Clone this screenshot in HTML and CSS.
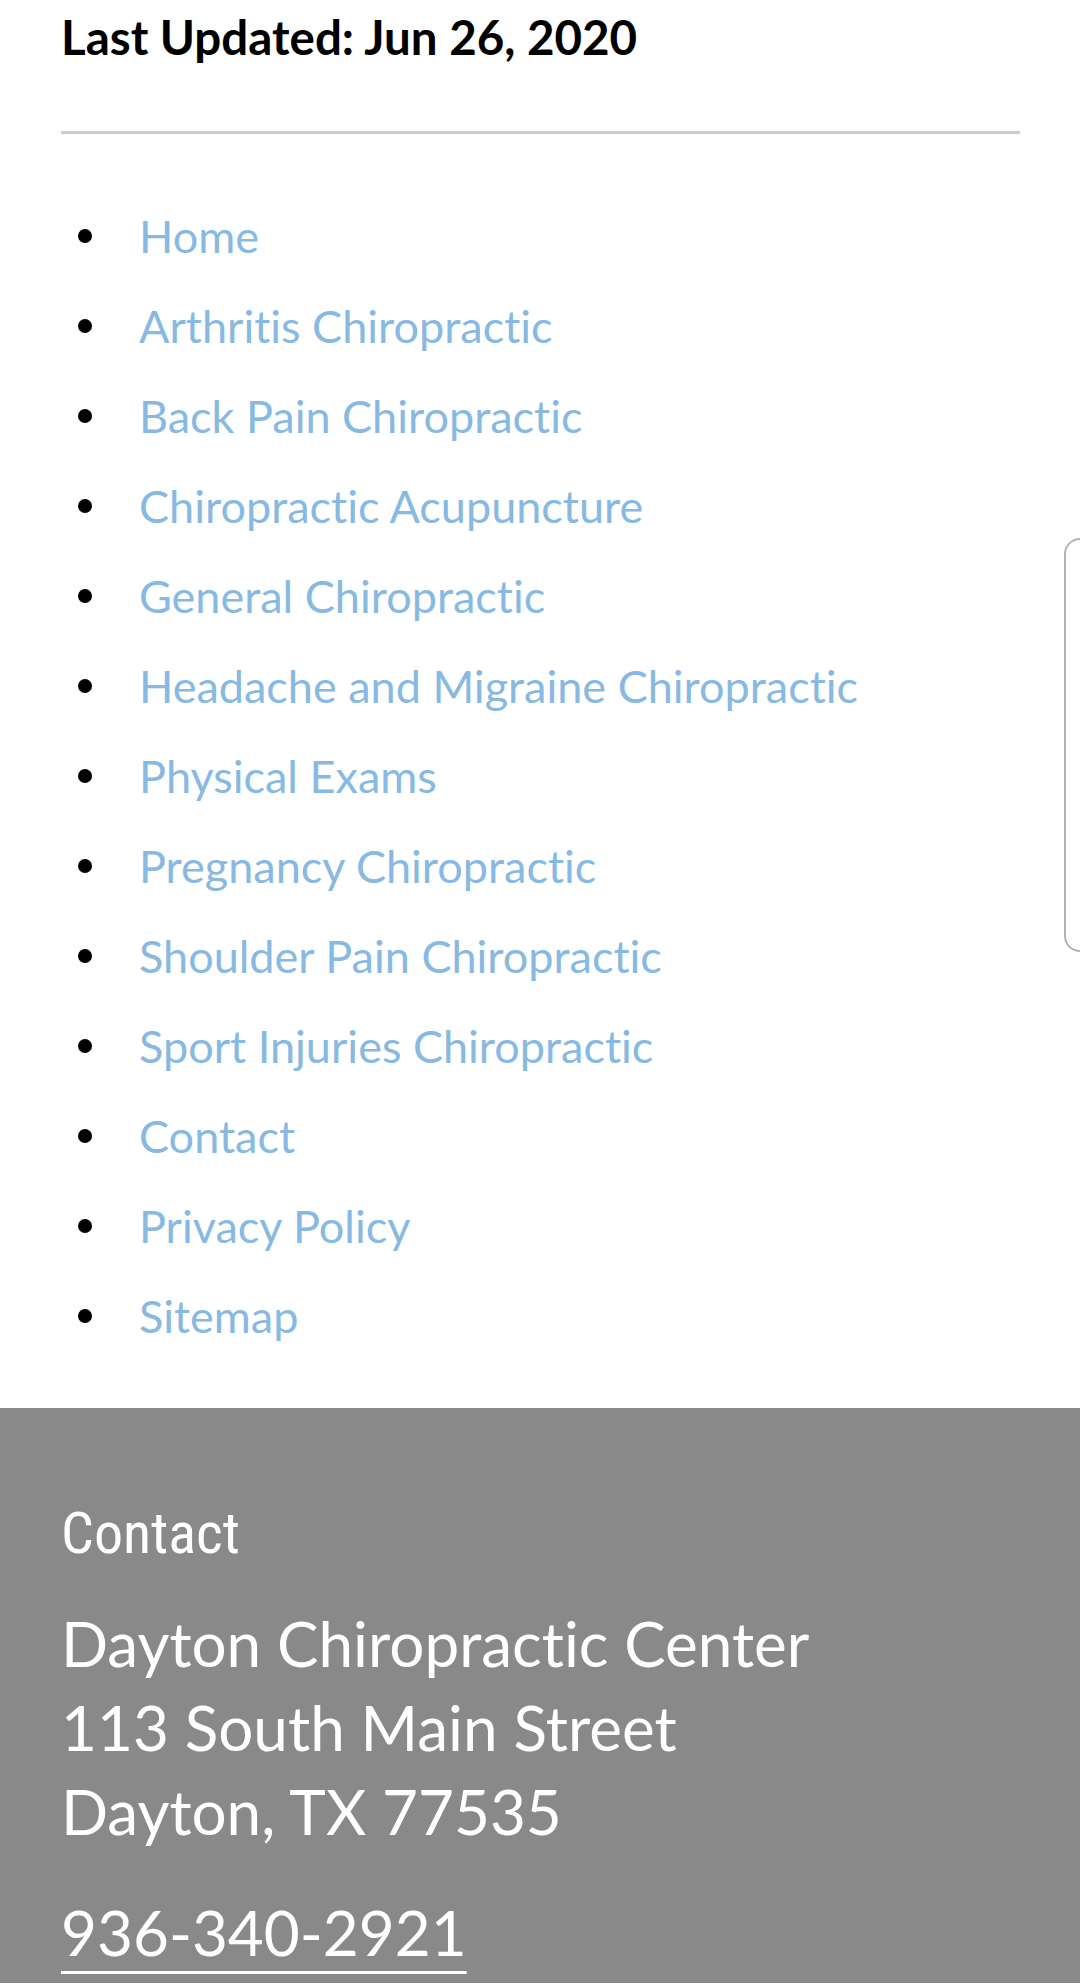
FILE: index.html
```html
<!DOCTYPE html>
<html lang="en">
<head>
    <meta charset="UTF-8">
    <meta name="viewport" content="width=device-width, initial-scale=1.0">
    <title>Sitemap - Dayton Chiropractic Center</title>
    <link rel="stylesheet" href="styles.css">
</head>

<body>
    <main class="content">
        <p class="updated">Last Updated: Jun 26, 2020</p>
        <hr class="divider">
        <ul class="sitemap">
            <li><a href="#">Home</a></li>
            <li><a href="#">Arthritis Chiropractic</a></li>
            <li><a href="#">Back Pain Chiropractic</a></li>
            <li><a href="#">Chiropractic Acupuncture</a></li>
            <li><a href="#">General Chiropractic</a></li>
            <li><a href="#">Headache and Migraine Chiropractic</a></li>
            <li><a href="#">Physical Exams</a></li>
            <li><a href="#">Pregnancy Chiropractic</a></li>
            <li><a href="#">Shoulder Pain Chiropractic</a></li>
            <li><a href="#">Sport Injuries Chiropractic</a></li>
            <li><a href="#">Contact</a></li>
            <li><a href="#">Privacy Policy</a></li>
            <li><a href="#">Sitemap</a></li>
        </ul>
    </main>

    <footer class="footer">
        <h2 class="footer-title">Contact</h2>
        <address class="address">
            Dayton Chiropractic Center<br>
            113 South Main Street<br>
            Dayton, TX 77535
        </address>
        <a class="phone" href="tel:9363402921">936-340-2921</a>
    </footer>

    <div class="side-tab"></div>
</body>
</html>
```

FILE: styles.css
```css
body {
    font-family: Lato, "Open Sans", sans-serif;
    font-variant-ligatures: no-common-ligatures;
    margin: 0;
    padding: 0;
    background-color: #fff;
    color: #000;
}

.content {
    padding: 0 60px 0 61px;
}

.updated {
    font-weight: bold;
    font-size: 47.5px;
    line-height: 58px;
    margin: 0;
    padding-top: 8px;
}

.divider {
    border: none;
    border-top: 3px solid #cccccc;
    height: 0;
    margin: 65px 0 0 0;
}

.sitemap {
    list-style: none;
    margin: 57px 0 0 0;
    padding: 0 0 0 17px;
    font-size: 45px;
    line-height: 90px;
}

.sitemap li {
    display: flex;
    align-items: center;
}

.sitemap li::before {
    content: "";
    flex: none;
    width: 14px;
    height: 14px;
    border-radius: 50%;
    background-color: #000;
    margin-right: 47px;
}

.sitemap a {
    color: #87b9e2;
    text-decoration: none;
}

.footer {
    margin-top: 47px;
    background-color: #898989;
    color: #fff;
    padding: 96px 61px 14px 61px;
    display: flex;
    flex-direction: column;
    align-items: flex-start;
}

.footer-title {
    font-family: "Roboto Condensed", "Liberation Sans Narrow", Roboto, sans-serif;
    font-weight: normal;
    font-size: 58px;
    line-height: 58px;
    margin: 0 0 39px 0;
}

.address {
    font-style: normal;
    font-size: 62px;
    line-height: 84px;
}

.phone {
    margin-top: 42px;
    color: #fff;
    font-size: 62px;
    line-height: 74px;
    text-decoration: underline;
    text-decoration-thickness: 3px;
    text-underline-offset: 15px;
}

.side-tab {
    position: fixed;
    top: 538px;
    left: 1064px;
    width: 60px;
    height: 410px;
    border: 2px solid #b3b3b3;
    border-right: none;
    border-radius: 16px 0 0 16px;
    background-color: #fff;
}
```
